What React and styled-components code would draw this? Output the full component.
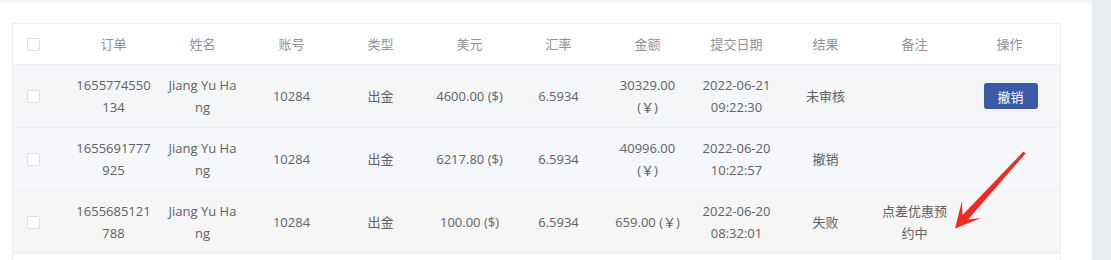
import React from 'react'
import styled, { createGlobalStyle } from 'styled-components'

const GlobalStyle = createGlobalStyle`
    body {
        margin: 0;
        font-family: "Open Sans", "Noto Sans CJK SC", sans-serif;
        background: #fff;
    }
`

const columns = ['订单', '姓名', '账号', '类型', '美元', '汇率', '金额', '提交日期', '结果', '备注', '操作']

// lines are split the same way the narrow columns wrap them in the screenshot
const orders = [
    {
        id: ['1655774550', '134'], name: ['Jiang Yu Ha', 'ng'], account: '10284', type: '出金',
        usd: '4600.00 ($)', rate: '6.5934', amount: ['30329.00', '(￥)'], date: ['2022-06-21', '09:22:30'],
        result: '未审核', note: [], action: true, tint: '#f5f6f7'
    },
    {
        id: ['1655691777', '925'], name: ['Jiang Yu Ha', 'ng'], account: '10284', type: '出金',
        usd: '6217.80 ($)', rate: '6.5934', amount: ['40996.00', '(￥)'], date: ['2022-06-20', '10:22:57'],
        result: '撤销', note: [], action: false, tint: '#f5f7fa'
    },
    {
        id: ['1655685121', '788'], name: ['Jiang Yu Ha', 'ng'], account: '10284', type: '出金',
        usd: '100.00 ($)', rate: '6.5934', amount: ['659.00 (￥)'], date: ['2022-06-20', '08:32:01'],
        result: '失败', note: ['点差优惠预', '约中'], action: false, tint: '#f6f6f6'
    },
]

function Lines({ items }) {
    return (
        <div>
            {items.map((l, i) => <Line key={i}>{l}</Line>)}
        </div>
    )
}

function App() {
    return (
        <Page>
            <GlobalStyle />
            <Main>
                <Table>
                    <HeaderRow>
                        <CheckCell><Checkbox /></CheckCell>
                        {columns.map(c => <HeadCell key={c}>{c}</HeadCell>)}
                    </HeaderRow>
                    {orders.map((o, i) => (
                        <Row key={i} tint={o.tint}>
                            <CheckCell><Checkbox /></CheckCell>
                            <Cell><Lines items={o.id} /></Cell>
                            <Cell><Lines items={o.name} /></Cell>
                            <Cell>{o.account}</Cell>
                            <Cell>{o.type}</Cell>
                            <Cell>{o.usd}</Cell>
                            <Cell>{o.rate}</Cell>
                            <Cell><Lines items={o.amount} /></Cell>
                            <Cell><Lines items={o.date} /></Cell>
                            <Cell>{o.result}</Cell>
                            <Cell><Lines items={o.note} /></Cell>
                            <Cell>{o.action && <CancelButton>撤销</CancelButton>}</Cell>
                        </Row>
                    ))}
                </Table>
            </Main>
            <Side />
            <Arrow width="1111" height="260" viewBox="0 0 1111 260">
                <polygon
                    fill="#ee2a22"
                    points="1023.5,151.5 1025.5,153.5 968,219.5 981,218 955,228.5 962,201 962.5,215"
                />
            </Arrow>
        </Page>
    )
}

export default App

const Page = styled.div`
    position: relative;
    display: flex;
    height: 100vh;
    overflow: hidden;
`

const Main = styled.main`
    width: 1092px;
    border-top: 3px solid #f3f4f6;
    padding: 20px 31px 0 12px;
    box-sizing: border-box;
    background: #fff;
`

const Side = styled.aside`
    flex: 1;
    background: #e9ecf0;
`

const Table = styled.div`
    border: 1px solid #ebeef5;
    border-bottom: none;
    min-height: 300px;
`

const HeaderRow = styled.div`
    display: grid;
    grid-template-columns: 56px repeat(10, 89px) 1fr;
    height: 40px;
    border-bottom: 1px solid #ebeef5;
    background: #fff;
`

const Row = styled(HeaderRow)`
    height: 62px;
    background: ${p => p.tint};
`

const Cell = styled.div`
    display: flex;
    align-items: center;
    justify-content: center;
    text-align: center;
    font-size: 13px;
    line-height: 22px;
    color: #606266;
`

const HeadCell = styled(Cell)`
    color: #909399;
`

const CheckCell = styled.div`
    display: flex;
    align-items: center;
    padding-left: 14px;
`

const Line = styled.div`
    white-space: nowrap;
`

const Checkbox = styled.span`
    display: block;
    width: 13px;
    height: 13px;
    box-sizing: border-box;
    border: 1px solid #dcdfe6;
    border-radius: 2px;
    background: #fff;
`

const CancelButton = styled.button`
    width: 54px;
    height: 26px;
    border: none;
    border-radius: 3px;
    background: #3b5aa8;
    color: #fff;
    font-family: inherit;
    font-size: 13px;
    padding: 0;
    margin-left: 2px;
    cursor: pointer;
`

const Arrow = styled.svg`
    position: absolute;
    left: 0;
    top: 0;
    pointer-events: none;
`
